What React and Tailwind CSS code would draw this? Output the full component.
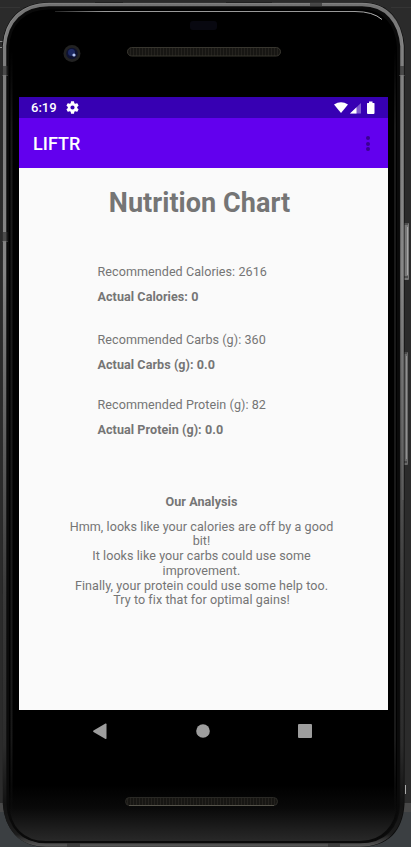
const metrics = [
  { recommended: 'Recommended Calories: 2616', actual: 'Actual Calories: 0', gap: 'mt-[44px]' },
  { recommended: 'Recommended Carbs (g): 360', actual: 'Actual Carbs (g): 0.0', gap: 'mt-[28px]' },
  { recommended: 'Recommended Protein (g): 82', actual: 'Actual Protein (g): 0.0', gap: 'mt-[25px]' },
];

// Metal rim, side buttons and camera of the handset.
function PhoneBody() {
  return (
    <svg className="absolute inset-0" width="411" height="847" viewBox="0 0 411 847" fill="none" aria-hidden="true">
      <defs>
        <linearGradient id="rim" x1="0" y1="0" x2="0" y2="847" gradientUnits="userSpaceOnUse">
          <stop offset="0" stopColor="#707070" />
          <stop offset=".03" stopColor="#7c7c7c" />
          <stop offset=".32" stopColor="#858585" />
          <stop offset=".5" stopColor="#626262" />
          <stop offset=".7" stopColor="#3a3a3a" />
          <stop offset=".88" stopColor="#2c2c2c" />
          <stop offset=".95" stopColor="#121212" />
          <stop offset=".985" stopColor="#1c1c1c" />
          <stop offset="1" stopColor="#5c5c5c" />
        </linearGradient>
        <linearGradient id="chin" x1="0" y1="785" x2="0" y2="842" gradientUnits="userSpaceOnUse">
          <stop offset="0" stopColor="#000" />
          <stop offset=".4" stopColor="#090909" />
          <stop offset=".82" stopColor="#202020" />
          <stop offset="1" stopColor="#292929" />
        </linearGradient>
        <linearGradient id="side" x1="0" y1="50" x2="0" y2="815" gradientUnits="userSpaceOnUse">
          <stop offset="0" stopColor="#000" />
          <stop offset=".1" stopColor="#191919" />
          <stop offset=".9" stopColor="#191919" />
          <stop offset="1" stopColor="#191919" stopOpacity="0" />
        </linearGradient>
        <linearGradient id="shine" x1="55" y1="0" x2="383" y2="0" gradientUnits="userSpaceOnUse">
          <stop offset="0" stopColor="#222" />
          <stop offset=".15" stopColor="#999" />
          <stop offset=".9" stopColor="#999" />
          <stop offset="1" stopColor="#bbb" />
        </linearGradient>
        <pattern id="mesh" width="3" height="3" patternUnits="userSpaceOnUse">
          <rect width="3" height="3" fill="#171613" />
          <rect x="1" width="1" height="3" fill="#24221e" />
        </pattern>
      </defs>
      <rect width="411" height="847" fill="#2b2b2b" />
      <rect y="812" width="411" height="35" fill="#3b3f42" />
      <path d="M0 803h5v9H0zM403 803h8v9h-8z" fill="#484848" />
      <path d="M0 41.5h4M0 47.5h4" stroke="#888" />
      <path d="M0 7.5h20M391 7.5h20" stroke="#353535" />
      <rect x="403" y="223" width="6" height="57" rx="1" fill="#777" />
      <rect x="403" y="352" width="5" height="113" rx="1" fill="#686868" />
      <path d="M407.5 227v48" stroke="#a5a5a5" />
      <path d="M406.5 356v103" stroke="#909090" />
      <path d="M404 224h4M404 353h3M404 277h4M404 462h3" stroke="#282828" />
      <path d="M405.5 785v9" stroke="#aaa" />
      <path d="M2 46C4 20 20 2.500 48 2.500H363C389 2.500 402 20 404.500 46V804C403 831 388 847 360 847H46C20 847 5 830 3 804Z" fill="#0c0c0c" />
      <path d="M4.500 46C6 21 22 4.500 49 4.500H362C387 4.500 400 22 402 46V804C401 829 386 845 360 845H46C20 845 6 828 4.500 804Z" stroke="url(#rim)" strokeWidth="3.500" />
      <path d="M3.500 46C5 20 21 3.500 49 3.500H363C389 3.500 402 21 403 46V500" stroke="#aaa" strokeOpacity=".25" />
      <path d="M8 48C9 24 24 8.500 49 8.500H362C383 8.500 397 24 398 48V804C397 825 383 842 360 842H46C23 842 9 827 8 804Z" fill="url(#chin)" stroke="#0a0a0a" strokeWidth="2" />
      <path d="M11.500 50V815M395 50V815" stroke="url(#side)" strokeWidth="2" />
      <path d="M55 11.500H355Q373 11.500 382 19.500" stroke="url(#shine)" />
      <path d="M2.500 66h5v9H2.500zM2.500 232h5v9H2.500zM400 66h4v9h-4zM310 3h12v3.500h-12zM67 843h13v4H67zM328 843h12v4h-12z" fill="#333" fillOpacity=".7" />
      <path d="M95 2.500h28M226 2.500h46" stroke="#202020" />
      <path d="M2 75.500h6M2 241.500h6M399 75.500h6" stroke="#777" strokeOpacity=".4" />
      <rect x="190" y="21" width="27" height="9" rx="3" fill="#080810" />
      <circle cx="72" cy="53.500" r="8.500" fill="#222" />
      <circle cx="72" cy="53.500" r="5.800" fill="#0e1230" />
      <circle cx="71.500" cy="52.500" r="3.500" fill="#1d2962" />
      <circle cx="74" cy="55" r="1.600" fill="#b3c5f3" />
      <rect x="127.500" y="47.500" width="153" height="8.500" rx="4.250" fill="url(#mesh)" stroke="#38362f" />
      <rect x="125.500" y="797.500" width="152" height="8" rx="4" fill="url(#mesh)" stroke="#2a2925" />
      <path d="M129 805.500H274" stroke="#55534a" />
    </svg>
  );
}

function StatusBar() {
  return (
    <div className="flex h-[21px] items-center bg-[#3700b3] pl-3 text-white">
      <span className="w-[35px] text-[13px] leading-[21px] font-medium">6:19</span>
      <svg width="13" height="13" viewBox="2 2 20 20" fill="currentColor">
        <path d="M19.140 12.940c.04-.3.060-.61.060-.94s-.02-.64-.07-.94l2.030-1.580a.49.490 0 0 0 .12-.61l-1.920-3.320a.49.490 0 0 0-.59-.22l-2.390.96a7 7 0 0 0-1.620-.94L14.400 2.810a.48.480 0 0 0-.48-.41h-3.840a.47.470 0 0 0-.47.410l-.36 2.540a7.300 7.300 0 0 0-1.620.94l-2.390-.96a.48.480 0 0 0-.59.220L2.740 8.870a.47.470 0 0 0 .12.610l2.030 1.580a5.900 5.900 0 0 0 0 1.880l-2.030 1.580a.49.490 0 0 0-.12.610l1.920 3.320c.12.220.37.290.59.220l2.390-.96c.5.380 1.030.7 1.620.94l.36 2.540c.05.240.24.410.48.410h3.840c.24 0 .44-.17.470-.41l.36-2.540a7 7 0 0 0 1.620-.94l2.390.96c.22.080.47 0 .59-.22l1.920-3.320a.47.470 0 0 0-.12-.61ZM12 15.200a3.200 3.200 0 1 1 0-6.400 3.200 3.200 0 0 1 0 6.400Z" />
      </svg>
      <svg className="mr-[12px] ml-auto" width="42" height="14" viewBox="0 0 42 14" fill="none">
        <path d="M0 3.500Q7 -1 14 3.500L7 12Z" fill="white" />
        <path d="M16 12.500L27 2v10.500Z" fill="#7f5acf" />
        <path d="M16 12.500L22.500 6.300v6.200Z" fill="white" />
        <path d="M33.500 2H35V.5h3.500V2H40q.5 0 .5.500V12q0 1-1 1H34q-1 0-1-1V2.500q0-.5.500-.5Z" fill="white" />
      </svg>
    </div>
  );
}

function AppBar() {
  return (
    <header className="flex h-[50px] items-center justify-between bg-[#6200ee] pl-[14px] pr-[18px]">
      <span className="pt-px text-[18px] leading-[24px] font-medium tracking-[0.050px] text-white">LIFTR</span>
      <div className="flex flex-col gap-[1.500px] pt-px">
        <i className="size-[4px] rounded-full bg-[#3a0092]" />
        <i className="size-[4px] rounded-full bg-[#3a0092]" />
        <i className="size-[4px] rounded-full bg-[#3a0092]" />
      </div>
    </header>
  );
}

function NavigationBar() {
  return (
    <nav className="flex h-[43px] items-center">
      <svg width="369" height="43" viewBox="0 0 369 43" fill="#9d9d9d">
        <path d="M74.500 20.500L86.500 13.500q1-.3 1 .7v14q0 1-1 .7L74.500 22q-1-.75 0-1.500Z" />
        <circle cx="184" cy="21" r="6.800" />
        <rect x="279" y="14" width="14" height="14" rx="1" />
      </svg>
    </nav>
  );
}

export default function App() {
  return (
    <div className="relative h-[847px] w-[411px] overflow-hidden bg-[#2b2b2b] font-[Roboto,sans-serif]">
      <PhoneBody />
      <div className="relative pt-[97px] pl-[19px]">
        <div className="w-[369px] bg-black">
          <StatusBar />
          <AppBar />
          <main className="h-[542px] bg-[#fafafa] pt-[18px] text-[12.570px] text-[#757575]">
            <h1 className="pr-[8px] text-center text-[27px] leading-[34px] font-bold tracking-[0.050px]">Nutrition Chart</h1>
            {metrics.map((m) => (
              <section key={m.recommended} className={`${m.gap} pl-[78.500px] leading-[15px] tracking-[0.060px]`}>
                <p>{m.recommended}</p>
                <p className="mt-[10px] font-bold">{m.actual}</p>
              </section>
            ))}
            <section className="mt-[58px] pr-[4px] text-center leading-[14.700px] tracking-[0.060px]">
              <h2 className="font-bold">Our Analysis</h2>
              <p className="mt-[10px]">
                Hmm, looks like your calories are off by a good<br />bit!<br />
                It looks like your carbs could use some<br />improvement.<br />
                Finally, your protein could use some help too.<br />
                Try to fix that for optimal gains!
              </p>
            </section>
          </main>
          <NavigationBar />
        </div>
      </div>
    </div>
  );
}
